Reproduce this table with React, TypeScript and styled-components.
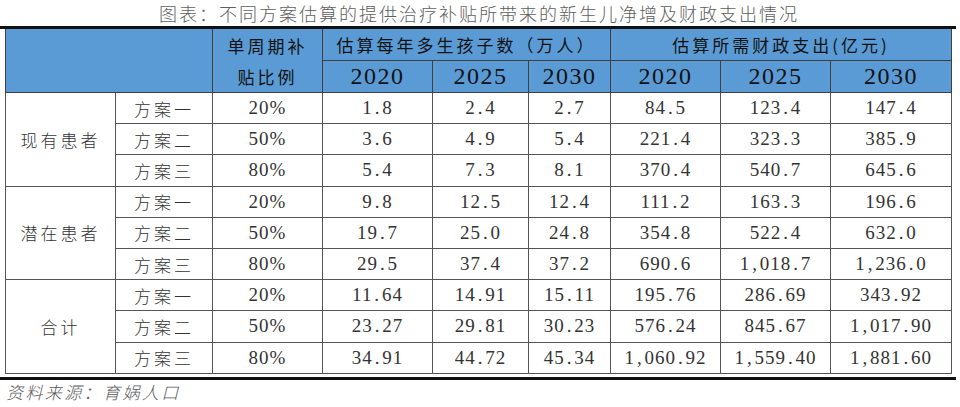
import React from 'react';
import styled, { createGlobalStyle } from 'styled-components';

const GlobalStyle = createGlobalStyle`
  body {
    margin: 0;
    background: #ffffff;
    font-family: "Noto Sans CJK SC", "Noto Sans", sans-serif;
  }
`;

const Page = styled.div`
  width: 956px;
`;

const Title = styled.div`
  height: 26px;
  line-height: 26px;
  text-align: center;
  font-size: 18px;
  letter-spacing: 2px;
  color: #606060;
  font-weight: 300;
  padding-left: 2px;
`;

const Rule = styled.div<{ $gap?: number }>`
  height: 3px;
  background: #111111;
  margin-top: ${(p) => p.$gap ?? 0}px;
`;

const Table = styled.table`
  margin-left: 5px;
  width: 946px;
  border-collapse: collapse;
  table-layout: fixed;
  border: 1px solid #555555;
  border-top: none;
`;

const HeadCell = styled.th`
  background: #5b9bd5;
  border: 1px solid #3f3f3f;
  border-top: none;
  height: 30px;
  padding: 0;
  text-align: center;
  font-weight: 400;
  font-size: 17px;
  letter-spacing: 3px;
  line-height: 31px;
  color: #111111;
  white-space: nowrap;
`;

const Year = styled.span`
  font-family: "Liberation Serif", serif;
  font-size: 24px;
  letter-spacing: 1.5px;
`;

const Cell = styled.td<{ $label?: boolean }>`
  border: 1px solid #555555;
  height: 30.2px;
  padding: 0;
  text-align: center;
  vertical-align: middle;
  color: #333333;
  white-space: nowrap;
  font-size: ${(p) => (p.$label ? '17px' : '19px')};
  letter-spacing: ${(p) => (p.$label ? '3px' : '1px')};
  font-family: ${(p) =>
    p.$label ? '"Noto Sans CJK SC", sans-serif' : '"Liberation Serif", serif'};
  font-weight: ${(p) => (p.$label ? 300 : 400)};
`;

const Punct = styled.span`
  display: inline-block;
  width: 0.5em;
  text-align: center;
`;

const Source = styled.div`
  padding: 2px 0 0 6px;
  line-height: 20px;
  font-size: 17px;
  letter-spacing: 2.4px;
  font-style: italic;
  color: #5a5a5a;
  font-weight: 300;
`;

const widths = [110, 97, 110, 110, 96, 82, 110, 110, 121];

const plans = [
  { name: '方案一', pct: '20%' },
  { name: '方案二', pct: '50%' },
  { name: '方案三', pct: '80%' },
];

const groups = [
  {
    label: '现有患者',
    rows: [
      ['1.8', '2.4', '2.7', '84.5', '123.4', '147.4'],
      ['3.6', '4.9', '5.4', '221.4', '323.3', '385.9'],
      ['5.4', '7.3', '8.1', '370.4', '540.7', '645.6'],
    ],
  },
  {
    label: '潜在患者',
    rows: [
      ['9.8', '12.5', '12.4', '111.2', '163.3', '196.6'],
      ['19.7', '25.0', '24.8', '354.8', '522.4', '632.0'],
      ['29.5', '37.4', '37.2', '690.6', '1,018.7', '1,236.0'],
    ],
  },
  {
    label: '合计',
    rows: [
      ['11.64', '14.91', '15.11', '195.76', '286.69', '343.92'],
      ['23.27', '29.81', '30.23', '576.24', '845.67', '1,017.90'],
      ['34.91', '44.72', '45.34', '1,060.92', '1,559.40', '1,881.60'],
    ],
  },
];

const Num = ({ value }: { value: string }) => (
  <>
    {value.split('').map((ch, i) =>
      ch === '.' || ch === ',' ? <Punct key={i}>{ch}</Punct> : <React.Fragment key={i}>{ch}</React.Fragment>
    )}
  </>
);

const years = ['2020', '2025', '2030'];

export default function App() {
  return (
    <>
      <GlobalStyle />
      <Page>
        <Title>图表：不同方案估算的提供治疗补贴所带来的新生儿净增及财政支出情况</Title>
        <Rule />
        <Table>
          <colgroup>
            {widths.map((w, i) => (
              <col key={i} style={{ width: w }} />
            ))}
          </colgroup>
          <thead>
            <tr>
              <HeadCell colSpan={2} rowSpan={2} />
              <HeadCell rowSpan={2}>
                单周期补
                <br />
                贴比例
              </HeadCell>
              <HeadCell colSpan={3}>估算每年多生孩子数（万人）</HeadCell>
              <HeadCell colSpan={3}>估算所需财政支出(亿元)</HeadCell>
            </tr>
            <tr>
              {[...years, ...years].map((y, i) => (
                <HeadCell key={i}>
                  <Year>{y}</Year>
                </HeadCell>
              ))}
            </tr>
          </thead>
          <tbody>
            {groups.map((g) =>
              g.rows.map((row, ri) => (
                <tr key={g.label + ri}>
                  {ri === 0 && (
                    <Cell $label rowSpan={3}>
                      {g.label}
                    </Cell>
                  )}
                  <Cell $label>{plans[ri].name}</Cell>
                  <Cell>{plans[ri].pct}</Cell>
                  {row.map((v, ci) => (
                    <Cell key={ci}>
                      <Num value={v} />
                    </Cell>
                  ))}
                </tr>
              ))
            )}
          </tbody>
        </Table>
        <Rule $gap={3} />
        <Source>资料来源：育娲人口</Source>
      </Page>
    </>
  );
}
